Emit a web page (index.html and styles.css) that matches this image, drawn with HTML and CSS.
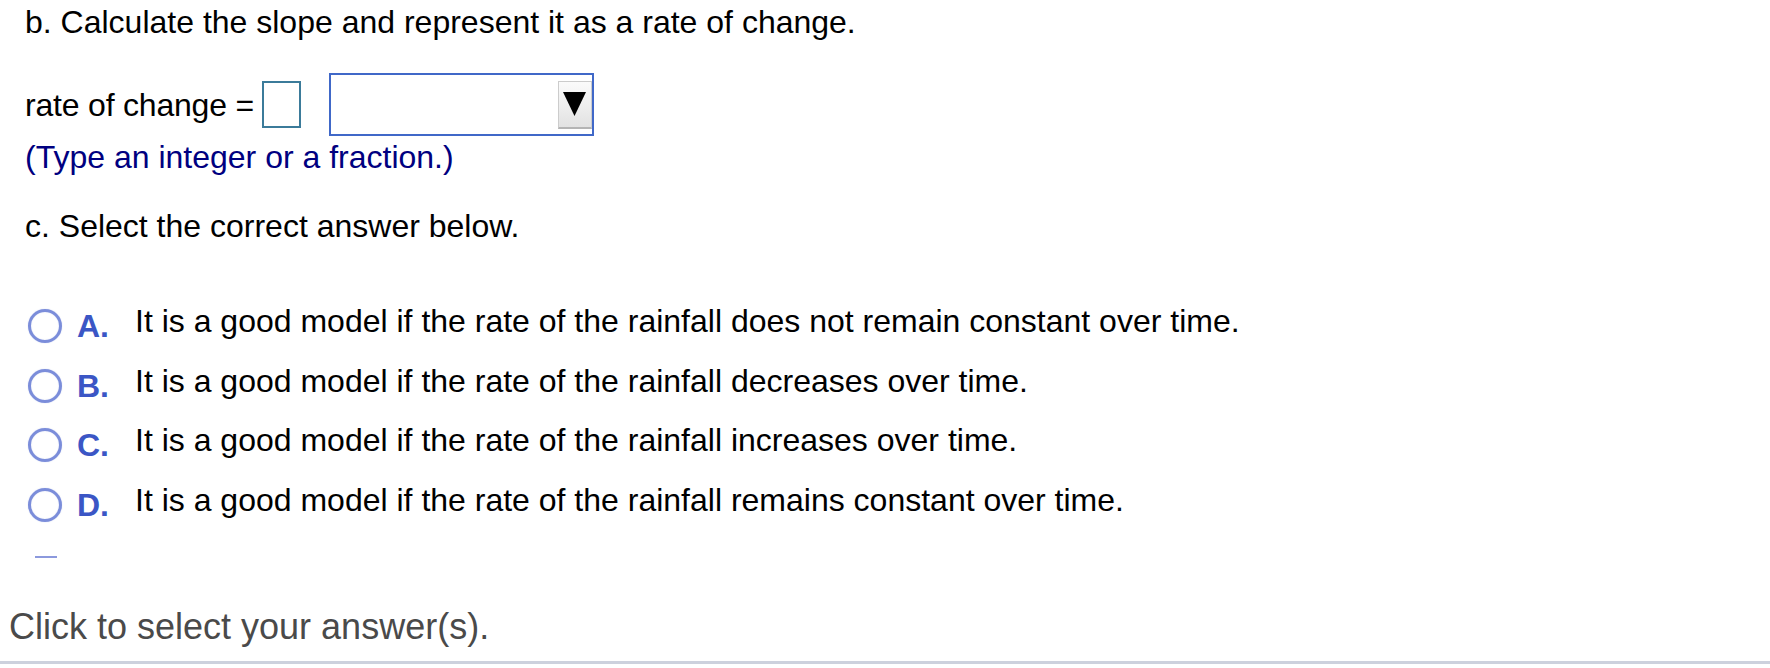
FILE: index.html
```html
<!DOCTYPE html>
<html lang="en">
<head>
<meta charset="utf-8">
<title>Rate of change</title>
<link rel="stylesheet" href="styles.css">
</head>
<body>
<div class="page">
  <main class="content">
    <p class="line first">b. Calculate the slope and represent it as a rate of change.</p>
    <div class="rate-row">
      <span class="line">rate of change =</span>
      <span class="answer-box"></span>
      <div class="select">
        <span class="select-btn">
          <svg width="23" height="24" viewBox="0 0 23 24"><polygon points="0,0 23,0 11.5,24" fill="#000"/></svg>
        </span>
      </div>
    </div>
    <p class="line hint">(Type an integer or a fraction.)</p>
    <p class="line part-c">c. Select the correct answer below.</p>
    <ul class="options">
      <li class="option"><span class="radio"></span><span class="opt-label">A.</span><span class="opt-text">It is a good model if the rate of the rainfall does not remain constant over time.</span></li>
      <li class="option"><span class="radio"></span><span class="opt-label">B.</span><span class="opt-text">It is a good model if the rate of the rainfall decreases over time.</span></li>
      <li class="option"><span class="radio"></span><span class="opt-label">C.</span><span class="opt-text">It is a good model if the rate of the rainfall increases over time.</span></li>
      <li class="option"><span class="radio"></span><span class="opt-label">D.</span><span class="opt-text">It is a good model if the rate of the rainfall remains constant over time.</span></li>
    </ul>
    <div class="peek"></div>
  </main>
  <footer class="footer">Click to select your answer(s).</footer>
</div>
</body>
</html>
```

FILE: styles.css
```css
html, body {
  margin: 0;
  padding: 0;
  background: #fff;
}

body {
  font-family: "Liberation Sans", Arial, Helvetica, sans-serif;
  color: #000;
  width: 1770px;
  height: 668px;
  overflow: hidden;
}

.content {
  padding: 2px 0 0 25px;
}

.line {
  margin: 0;
  font-size: 32px;
  line-height: 40px;
  white-space: nowrap;
}

.rate-row {
  display: flex;
  align-items: center;
  height: 63px;
  margin-top: 31px;
}

.rate-row .line {
  letter-spacing: -0.2px;
}

.answer-box {
  width: 39px;
  height: 47px;
  box-sizing: border-box;
  border: 2px solid #3b7b9a;
  margin-left: 8px;
  flex: none;
}

.select {
  width: 265px;
  height: 63px;
  box-sizing: border-box;
  border: 2px solid #4068c8;
  margin-left: 28px;
  display: flex;
  justify-content: flex-end;
  align-items: center;
  flex: none;
}

.select-btn {
  width: 34px;
  height: 48px;
  box-sizing: border-box;
  border: 1px solid #cccccc;
  border-bottom: 2px solid #b4b4b4;
  background: linear-gradient(#fbfbfb, #e2e2e2);
  display: flex;
  align-items: center;
  justify-content: center;
}

.hint {
  color: #000080;
  margin-top: 1px;
}

.part-c {
  margin-top: 29px;
}

.options {
  list-style: none;
  margin: 55px 0 0 0;
  padding: 0;
  display: flex;
  flex-direction: column;
  gap: 19.5px;
}

.option {
  display: flex;
  align-items: flex-start;
  height: 40px;
}

.radio {
  width: 34px;
  height: 34px;
  box-sizing: border-box;
  border-radius: 50%;
  border: 3px solid #7b8dda;
  box-shadow: 0 0 1px rgba(120, 140, 215, 0.5), inset 0 0 1px rgba(120, 140, 215, 0.5);
  margin: 8px 0 0 3px;
  flex: none;
}

.opt-label {
  margin-left: 15px;
  width: 58px;
  flex: none;
  font-weight: bold;
  color: #3b56c5;
  font-size: 32px;
  line-height: 40px;
  padding-top: 5px;
}

.opt-text {
  font-size: 32px;
  line-height: 40px;
  white-space: nowrap;
}

.peek {
  margin: 36.5px 0 0 10px;
  width: 22px;
  height: 2px;
  background: #8c99dd;
}

.footer {
  margin-top: 47px;
  padding: 0 0 12px 9px;
  font-size: 36px;
  line-height: 44px;
  color: #4a4a4a;
  border-bottom: 3px solid #cdd1dd;
}
```
